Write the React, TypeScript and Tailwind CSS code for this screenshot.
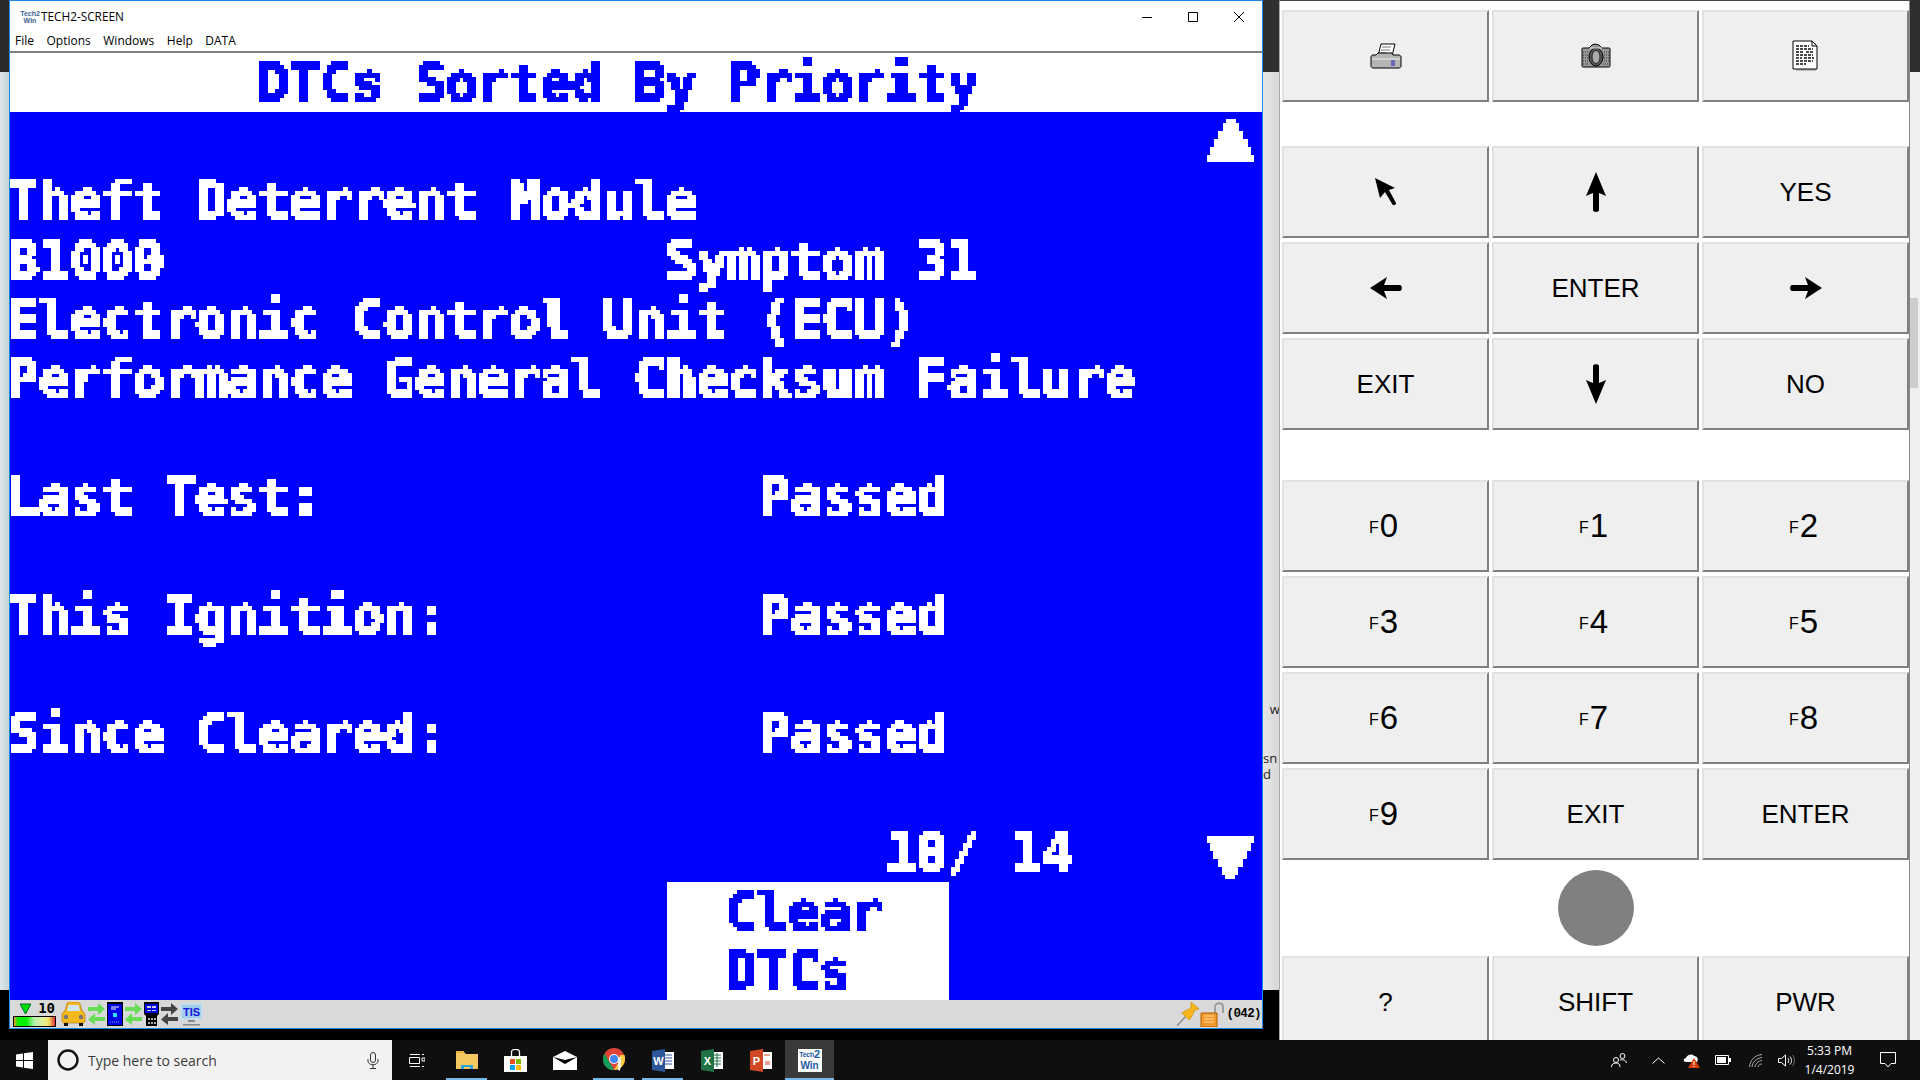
import type { ReactNode } from "react";

const mono = "font-['DejaVu_Sans_Mono',monospace] font-bold text-[54px] tracking-[-1.18px] leading-[59px] whitespace-pre";

// the scan tool draws a blocky LCD font, so the text gets sampled to a 4px grid
const LcdFilter = () => (
  <svg width="0" height="0" className="absolute">
    <filter id="lcd" x="0" y="-10%" width="100%" height="120%" colorInterpolationFilters="sRGB">
      <feFlood x="2" y="2" width="1" height="1" />
      <feComposite width="4" height="4" />
      <feTile result="grid" />
      <feComposite in="SourceGraphic" in2="grid" operator="in" />
      <feMorphology operator="dilate" radius="2" />
      <feComponentTransfer>
        <feFuncA type="discrete" tableValues="0 1 1 1" />
      </feComponentTransfer>
    </filter>
  </svg>
);

const Row = ({ children, className = "" }: { children?: ReactNode; className?: string }) => (
  <div className={`h-[59.19px] shrink-0 -ml-[3px] flex items-center ${mono} ${className}`}>{children}</div>
);

const Lcd = ({ children }: { children: ReactNode }) => <span className="[filter:url(#lcd)]">{children}</span>;

const Triangle = ({ className }: { className: string }) => (
  <svg width="47" height="43" viewBox="0 0 47 43" className={className} shapeRendering="crispEdges">
    <path d="M19 0h10v4h3v8h4v8h5v8h3v8h3v7H0v-7h3v-8h4v-8h4v-8h5V4h3z" fill="#fff" />
  </svg>
);

const PrinterIcon = () => (
  <svg width="32" height="26" viewBox="0 0 32 26">
    <path d="M11 1h14l-3 12H8z" fill="#fff" stroke="#000" />
    <path d="M12 4h9M11 7h9M10 10h7" stroke="#777" />
    <path d="M3 12h3l2-2h14l1 2h6c1 0 2 1 2 2v9c0 1-1 2-2 2H3c-1 0-2-1-2-2v-9c0-1 1-2 2-2z" fill="#b5b5b5" stroke="#000" />
    <path d="M2 16h28" stroke="#eee" />
    <path d="M21 18h4M21 20h4M21 22h4" stroke="#1d1db8" />
  </svg>
);

const CameraIcon = () => (
  <svg width="30" height="26" viewBox="0 0 30 26">
    <path d="M2 5h6l3-3 3-1 4 1 3 3h7c1 0 1 1 1 1v17c0 1-1 1-1 1H2c-1 0-1-1-1-1V6s0-1 1-1z" fill="#9a9a9a" stroke="#000" />
    <path d="M2 9h5M23 9h5M2 12h5M23 12h5M2 15h5M23 15h5M2 18h5M23 18h5M2 21h6M22 21h6" stroke="#333" strokeDasharray="1 1" />
    <ellipse cx="15" cy="14" rx="7" ry="9" fill="#555" stroke="#000" />
    <ellipse cx="15" cy="14" rx="4" ry="6.5" fill="#ababab" stroke="#222" />
    <path d="M9 5h12" stroke="#eee" />
  </svg>
);

const DocIcon = () => (
  <svg width="30" height="32" viewBox="0 0 30 32">
    <path d="M5 3h20v28H5z" fill="#bdbdbd" />
    <path d="M2 1h19l5 5v23H2z" fill="#fff" stroke="#000" />
    <path d="M21 1v5h5" fill="none" stroke="#000" />
    <path d="M5 6h13M5 9h17M5 12h8M15 12h8M5 15h17M5 18h6M13 18h10M5 21h17M5 24h10" stroke="#111" strokeWidth="1.3" strokeDasharray="3 1" />
  </svg>
);

const CursorIcon = () => (
  <svg width="24" height="30" viewBox="0 0 24 30">
    <path d="M1 1l20 10-6 2 7 13c.6 1.400-2.400 3-3.400 1.800L11 15l-5 6z" fill="#000" />
  </svg>
);

const UpIcon = () => (
  <svg width="22" height="42" viewBox="0 0 22 42">
    <path d="M11 1l10 24-7-3v17c0 2.500-6 2.500-6 0V22l-7 3z" fill="#000" />
  </svg>
);

const DownIcon = () => (
  <svg width="22" height="42" viewBox="0 0 22 42" className="rotate-180">
    <path d="M11 1l10 24-7-3v17c0 2.500-6 2.500-6 0V22l-7 3z" fill="#000" />
  </svg>
);

const LeftIcon = () => (
  <svg width="34" height="24" viewBox="0 0 34 24">
    <path d="M1 12L18 1l-3 8h16c2.500 0 2.500 6 0 6H15l3 8z" fill="#000" />
  </svg>
);

const RightIcon = () => (
  <svg width="34" height="24" viewBox="0 0 34 24" className="rotate-180">
    <path d="M1 12L18 1l-3 8h16c2.500 0 2.500 6 0 6H15l3 8z" fill="#000" />
  </svg>
);

const Key = ({ children }: { children: ReactNode }) => (
  <div className="h-[92px] flex items-center justify-center bg-[#efefef] border-t-2 border-l-2 border-t-[#e2e2e2] border-l-[#e2e2e2] border-r-2 border-b-2 border-r-[#808080] border-b-[#808080] text-[26px] text-black font-['Liberation_Sans',sans-serif]">
    {children}
  </div>
);

const FKey = ({ n }: { n: string }) => (
  <Key>
    <span className="flex items-baseline pr-[4px]">
      <span className="text-[16px] mr-[1px] translate-y-[-4px]">F</span>
      <span className="text-[33px] leading-none">{n}</span>
    </span>
  </Key>
);

const Pair = ({ top, bottom }: { top: string; bottom: string }) => (
  <svg width="19" height="22" viewBox="0 0 19 22">
    <path d="M1 4h10V0l7 6-7 6V8H1z" fill={top} />
    <path d="M18 14H8v-4l-7 6.500L8 22v-4h10z" fill={bottom} />
  </svg>
);

const StatusLeft = () => (
  <div className="flex items-center gap-[1px] pl-[3px]">
    <div className="w-[43px] h-[25px] flex flex-col justify-between mr-[4px]">
      <div className="flex items-center justify-between pl-[7px] pr-[1px] h-[13px]">
        <svg width="11" height="11" viewBox="0 0 11 11">
          <path d="M0 1h11L5.500 11z" fill="#00e000" stroke="#063" />
        </svg>
        <span className="font-['DejaVu_Sans_Mono',monospace] font-bold text-[14px] leading-none text-black">10</span>
      </div>
      <div className="h-[11px] border border-black bg-[linear-gradient(90deg,#e8a030_0%,#00f000_10%,#00f000_30%,#b8f0b0_50%,#e8f090_75%,#f0e060_85%,#e03030_100%)]" />
    </div>
    <svg width="25" height="25" viewBox="0 0 25 25">
      <path d="M4 9l2-7c0-1 1-2 2-2h9c1 0 2 1 2 2l2 7c2 1 3 2 3 4v6c0 1-1 2-2 2H3c-1 0-2-1-2-2v-6c0-2 1-3 3-4z" fill="#f6b91b" stroke="#a86a00" strokeWidth=".6" />
      <path d="M6 9l1.500-6h10L19 9z" fill="#cfe6f2" />
      <circle cx="5" cy="15" r="2.200" fill="#777" />
      <circle cx="20" cy="15" r="2.200" fill="#777" />
      <path d="M3 21h4v3H3zM18 21h4v3h-4z" fill="#111" />
    </svg>
    <Pair top="#66dd55" bottom="#66dd55" />
    <svg width="16" height="24" viewBox="0 0 16 24">
      <path d="M0 0h16v24H0z" fill="#000" />
      <path d="M1 2h14v21H1z" fill="#0000e6" />
      <path d="M4 5h8M4 7h5" stroke="#fff" />
      <path d="M6 11h4v4H6z" fill="#25e0e8" />
      <path d="M3 20h10" stroke="#9ad" strokeDasharray="1 1" />
    </svg>
    <Pair top="#66dd55" bottom="#66dd55" />
    <svg width="15" height="24" viewBox="0 0 15 24">
      <path d="M0 0h15v12l-2 2v10H2V14l-2-2z" fill="#000" />
      <path d="M1 2h13v9H1z" fill="#0000e6" />
      <path d="M3 4h4v2H3zM8 4h4v2H8zM3 8h4v1H3zM8 8h4v1H8z" fill="#ccd" />
      <path d="M4 16h2v2H4zM7 16h2v2H7zM10 16h2v2h-2zM4 20h2v2H4zM7 20h2v2H7zM10 20h2v2h-2z" fill="#aaa" />
    </svg>
    <Pair top="#444444" bottom="#444444" />
    <svg width="23" height="23" viewBox="0 0 23 23">
      <path d="M0 0h23v17H0z" fill="#c6dde8" />
      <path d="M2 2h19v13H2z" fill="#9ecdf0" />
      <path d="M8 17h7v2H8zM3 21h17v1.500H3z" fill="#888" />
      <text x="11.500" y="13" textAnchor="middle" fontFamily="Liberation Sans" fontWeight="bold" fontSize="11" fill="#1414d8">TIS</text>
    </svg>
  </div>
);

const StatusRight = () => (
  <div className="flex items-center pr-[1px]">
    <svg width="24" height="24" viewBox="0 0 24 24">
      <path d="M1 24l9-10" stroke="#888" strokeWidth="1.300" />
      <path d="M15 0l8 7-4 1-4 8-2 2-7-7 3-2 6-3z" fill="#f7b71a" stroke="#c97f00" strokeWidth=".6" />
    </svg>
    <svg width="25" height="25" viewBox="0 0 25 25">
      <path d="M15 11V5c0-5 8-5 8 0v6" fill="none" stroke="#9a9a9a" strokeWidth="1.800" />
      <path d="M1 11h16v14H1z" fill="#f39a2c" stroke="#b35f00" />
      <path d="M4 14h10M4 17h10M4 20h10" stroke="#ffd9a0" />
    </svg>
    <span className="font-['Liberation_Mono',monospace] font-bold text-[12.500px] tracking-[-.6px] text-black ml-[1px]">(042)</span>
  </div>
);

const TaskIcon = ({ children, active = false, open = false }: { children: ReactNode; active?: boolean; open?: boolean }) => (
  <div className={`relative w-[49px] h-full flex items-center justify-center ${active ? "bg-[#3a3a3a]" : ""}`}>
    {children}
    {open && <div className={`absolute bottom-0 h-[2px] bg-[#76b9ed] ${active ? "inset-x-0" : "inset-x-[4px]"}`} />}
  </div>
);

const Taskbar = () => (
  <div className="h-10 shrink-0 flex items-center bg-[#0f0f0f]">
    <div className="w-12 h-full flex items-center justify-center">
      <svg width="17" height="17" viewBox="0 0 17 17">
        <path d="M0 2.500l7-1V8H0zM8 1.300L17 0v8H8zM0 9h7v6.500l-7-1zM8 9h9v8l-9-1.300z" fill="#fff" />
      </svg>
    </div>
    <div className="w-[344px] h-full bg-[#f2f2f2] flex items-center pl-[9px] pr-[13px]">
      <svg width="22" height="22" viewBox="0 0 22 22">
        <circle cx="11" cy="11" r="9.500" fill="none" stroke="#111" strokeWidth="2.400" />
      </svg>
      <span className="ml-[9px] text-[14px] text-[#3b3b3b] font-['Open_Sans',sans-serif] flex-1">Type here to search</span>
      <svg width="12" height="17" viewBox="0 0 12 17" fill="none" stroke="#333">
        <rect x="3.500" y=".5" width="5" height="10" rx="2.500" />
        <path d="M1 7v2c0 5 10 5 10 0V7M6 13v3M3 16.500h6" />
      </svg>
    </div>
    <div className="w-[50px] h-full flex items-center justify-center">
      <svg width="16" height="15" viewBox="0 0 16 15" fill="none" stroke="#fff">
        <path d="M.5 4.500h10v6H.5zM1 1.500h10M1 13.500h10" />
        <path d="M13 1.500h2M13 5h3v3h-3zM13 13.500h2" />
      </svg>
    </div>
    <TaskIcon open>
      <svg width="22" height="18" viewBox="0 0 22 18">
        <path d="M0 1h8l2 2h12v15H0z" fill="#f3c95f" />
        <path d="M0 0h8v2H0z" fill="#e8b23f" />
        <path d="M5 14h12v4h-3v-2H8v2H5z" fill="#2aa6d9" />
      </svg>
    </TaskIcon>
    <TaskIcon>
      <svg width="23" height="23" viewBox="0 0 23 23">
        <path d="M0 7h23v16H0z" fill="#fff" />
        <path d="M7.500 8V3c0-3.500 8-3.500 8 0v5" fill="none" stroke="#fff" strokeWidth="1.300" />
        <path d="M6 10h5v5H6z" fill="#f25022" />
        <path d="M12 10h5v5h-5z" fill="#7fba00" />
        <path d="M6 16h5v5H6z" fill="#00a4ef" />
        <path d="M12 16h5v5h-5z" fill="#ffb900" />
      </svg>
    </TaskIcon>
    <TaskIcon>
      <svg width="24" height="19" viewBox="0 0 24 19">
        <path d="M0 6l12-6 12 6v13H0z" fill="#fff" />
        <path d="M0 6l12 3 12-3-12 7z" fill="#000" />
      </svg>
    </TaskIcon>
    <TaskIcon open>
      <svg width="22" height="24" viewBox="0 0 22 24">
        <circle cx="11" cy="11" r="11" fill="#db4437" />
        <path d="M1.500 5.500L7 15l4 7c-6 .5-11-4-11-11 0-2 .5-4 1.500-5.500z" fill="#0f9d58" />
        <path d="M22 11c0 6-5 11-11 11l4.500-7.500L17 7h4.500c.3 1 .5 2.500.5 4z" fill="#ffcd40" />
        <circle cx="11" cy="11" r="5" fill="#fff" />
        <circle cx="11" cy="11" r="4" fill="#4285f4" />
        <path d="M15 9h3v10l-1.500 4-1.500-1z" fill="#f5f0e0" />
      </svg>
    </TaskIcon>
    <TaskIcon open>
      <svg width="22" height="23" viewBox="0 0 22 23">
        <path d="M9 3h13v17H9z" fill="#fff" />
        <path d="M13 6h7M13 9h7M13 12h7M13 15h7" stroke="#2b579a" />
        <path d="M0 2l13-2v23L0 21z" fill="#2b579a" />
        <text x="6.500" y="16" textAnchor="middle" fontFamily="Liberation Sans" fontWeight="bold" fontSize="11" fill="#fff">W</text>
      </svg>
    </TaskIcon>
    <TaskIcon>
      <svg width="22" height="23" viewBox="0 0 22 23">
        <path d="M9 3h13v17H9z" fill="#fff" />
        <path d="M13 6h7M13 9h7M13 12h7M13 15h7M16 4v14" stroke="#217346" />
        <path d="M0 2l13-2v23L0 21z" fill="#217346" />
        <text x="6.500" y="16" textAnchor="middle" fontFamily="Liberation Sans" fontWeight="bold" fontSize="11" fill="#fff">X</text>
      </svg>
    </TaskIcon>
    <TaskIcon>
      <svg width="22" height="23" viewBox="0 0 22 23">
        <path d="M9 3h13v17H9z" fill="#fff" />
        <path d="M14 6h6M15 13h5M15 15h5" stroke="#d24726" />
        <path d="M0 2l13-2v23L0 21z" fill="#d24726" />
        <text x="6.500" y="16" textAnchor="middle" fontFamily="Liberation Sans" fontWeight="bold" fontSize="11" fill="#fff">P</text>
      </svg>
    </TaskIcon>
    <TaskIcon active open>
      <div className="w-6 h-[23px] bg-white flex flex-col items-center justify-center font-['Liberation_Sans',sans-serif] font-bold text-[#1e5aa0]">
        <span className="flex items-center text-[7px] leading-[11px] tracking-[-.3px]">Tech<span className="text-[11px]">2</span></span>
        <span className="text-[10px] leading-[11px]">Win</span>
      </div>
    </TaskIcon>
    <div className="flex-1" />
    <div className="w-[46px] flex justify-center">
      <svg width="16" height="15" viewBox="0 0 16 15" fill="none" stroke="#fff">
        <circle cx="5" cy="7" r="2.500" />
        <path d="M.5 14c0-3 2-4 4.500-4s4 1 4 4" />
        <circle cx="11.500" cy="3" r="2.500" />
        <path d="M9 7c2-.5 6-.5 6.500 3" />
      </svg>
    </div>
    <div className="w-[33px] flex justify-center">
      <svg width="13" height="7" viewBox="0 0 13 7" fill="none" stroke="#fff">
        <path d="M.5 6.500l6-5.500 6 5.500" />
      </svg>
    </div>
    <div className="w-[32px] flex justify-center">
      <svg width="17" height="15" viewBox="0 0 17 15">
        <path d="M3 9c-3 0-3-4 0-4 1-3 6-5 8-2 3 0 5 3 3 6z" fill="#fff" />
        <path d="M11 5l6 10H5z" fill="#d83b01" />
        <path d="M10.500 8h1v4h-1zM10.500 13h1v1h-1z" fill="#fff" />
      </svg>
    </div>
    <div className="w-[32px] flex justify-center">
      <svg width="16" height="10" viewBox="0 0 16 10">
        <path d="M.5.5h13v9H.5z" fill="none" stroke="#fff" />
        <path d="M2 2h9v6H2zM14 3h2v4h-2z" fill="#fff" />
      </svg>
    </div>
    <div className="w-[33px] flex justify-center">
      <svg width="14" height="13" viewBox="0 0 14 13" fill="none" stroke="#aaa">
        <path d="M.5 13C1 6 6 1 13 .5M3 13c.5-5 4-8.500 10-9.500M6 13c.3-3 3-6 7-6.500M9 13c0-2 2-3 4-3" />
      </svg>
    </div>
    <div className="w-[28px] flex justify-center">
      <svg width="17" height="13" viewBox="0 0 17 13" fill="none" stroke="#fff">
        <path d="M.5 4.500h3L7.500 1v11l-4-3.500h-3zM10 4c1 1.500 1 3.500 0 5M12 2.500c2 2.500 2 5.500 0 8" />
        <path d="M14.500 1c2.500 3 2.500 8 0 11" stroke="#777" />
      </svg>
    </div>
    <div className="w-[59px] mr-[7px] flex flex-col items-center text-[12px] leading-[19px] text-white font-['Open_Sans',sans-serif]">
      <span>5:33 PM</span>
      <span>1/4/2019</span>
    </div>
    <div className="w-[44px] flex justify-center">
      <svg width="16" height="16" viewBox="0 0 16 16" fill="none" stroke="#fff">
        <path d="M.5.5h15v11h-4.500l-3 3.500-3-3.500H.5z" />
      </svg>
    </div>
    <div className="w-[10px]" />
  </div>
);

export default function App() {
  return (
    <div className="w-[1920px] h-[1080px] flex flex-col bg-black overflow-hidden">
      <LcdFilter />
      <div className="h-[1040px] flex overflow-hidden">
        {/* desktop sliver on the left */}
        <div className="w-[9px] flex flex-col">
          <div className="h-[72px] bg-[#2b2b2b]" />
          <div className="h-[918px] bg-gradient-to-r from-[#dfe5e8] to-[#c4d4da]" />
        </div>

        {/* emulator window */}
        <div className="w-[1254px] h-[1029px] flex flex-col border-x border-b border-[#1e88e5] border-t border-t-[#1e88e5] bg-white overflow-hidden">
          <div className="h-[32px] shrink-0 flex items-center font-['Open_Sans',sans-serif] text-[11.800px] text-black">
            <div className="w-[31px] pl-[9px] flex flex-col items-center font-['Liberation_Sans',sans-serif] font-bold text-[7px] leading-[7px] text-[#3a5f90]">
              <span>Tech2</span>
              <span>Win</span>
            </div>
            <span className="flex-1">TECH2-SCREEN</span>
            <div className="w-[46px] flex justify-center">
              <svg width="10" height="10" viewBox="0 0 10 10"><path d="M0 5.500h10" stroke="#000" /></svg>
            </div>
            <div className="w-[46px] flex justify-center">
              <svg width="10" height="10" viewBox="0 0 10 10"><path d="M.5.5h9v9h-9z" fill="none" stroke="#000" /></svg>
            </div>
            <div className="w-[46px] flex justify-center">
              <svg width="10" height="10" viewBox="0 0 10 10"><path d="M0 0l10 10M10 0L0 10" stroke="#000" /></svg>
            </div>
          </div>
          <div className="h-[20px] shrink-0 flex items-center gap-[12.500px] pl-[5px] pb-[2px] border-b-2 border-b-[#808080] font-['Open_Sans',sans-serif] text-[12px] text-black">
            <span>File</span>
            <span>Options</span>
            <span>Windows</span>
            <span>Help</span>
            <span>DATA</span>
          </div>

          <Row className="text-[#0000ff]"><Lcd>{"        DTCs Sorted By Priority"}</Lcd></Row>
          <div className="flex-1 bg-[#0000ff] text-white flex flex-col">
            <Row className="justify-end pr-[8px]">
              <Triangle className="mb-[3px]" />
            </Row>
            <Row><Lcd>{"Theft Deterrent Module"}</Lcd></Row>
            <Row><Lcd>{"B1000                Symptom 31"}</Lcd></Row>
            <Row><Lcd>{"Electronic Control Unit (ECU)"}</Lcd></Row>
            <Row><Lcd>{"Performance General Checksum Failure"}</Lcd></Row>
            <Row />
            <Row><Lcd>{"Last Test:              Passed"}</Lcd></Row>
            <Row />
            <Row><Lcd>{"This Ignition:          Passed"}</Lcd></Row>
            <Row />
            <Row><Lcd>{"Since Cleared:          Passed"}</Lcd></Row>
            <Row />
            <Row className="justify-between pr-[8px]">
              <Lcd>{"                            10/ 14"}</Lcd>
              <Triangle className="rotate-180 mt-[10px]" />
            </Row>
            <div className="w-[282px] ml-[657px] flex-1 bg-white text-[#0000ff] pl-[61px]">
              <Row><Lcd>Clear</Lcd></Row>
              <Row><Lcd>DTCs</Lcd></Row>
            </div>
          </div>

          <div className="h-[28px] shrink-0 bg-[#d9d9d9] flex items-center justify-between">
            <StatusLeft />
            <StatusRight />
          </div>
        </div>

        {/* strip of the window behind */}
        <div className="w-[16px] flex flex-col">
          <div className="h-[72px] bg-[#2f2f2f]" />
          <div className="h-[918px] bg-gradient-to-r from-[#e6e6e6] to-[#d8d8d8] pt-[629px] text-[13px] leading-[16px] text-[#222] font-['Open_Sans',sans-serif] overflow-hidden whitespace-pre">
            <div>{"  w"}</div>
            <div className="mt-[33px]">sn</div>
            <div>d</div>
          </div>
        </div>

        {/* key panel */}
        <div className="w-[631px] h-full bg-white border-l border-l-[#a8a8a8] border-r border-r-[#888] border-t border-t-[#444] pl-[2px] pt-[9px] flex flex-col overflow-hidden">
          <div className="grid grid-cols-3 gap-x-[3px] w-[627px] shrink-0">
            <Key><PrinterIcon /></Key>
            <Key><CameraIcon /></Key>
            <Key><DocIcon /></Key>
          </div>
          <div className="grid grid-cols-3 gap-x-[3px] gap-y-1 w-[627px] mt-[44px] shrink-0">
            <Key><CursorIcon /></Key>
            <Key><UpIcon /></Key>
            <Key>YES</Key>
            <Key><LeftIcon /></Key>
            <Key>ENTER</Key>
            <Key><RightIcon /></Key>
            <Key>EXIT</Key>
            <Key><DownIcon /></Key>
            <Key>NO</Key>
          </div>
          <div className="grid grid-cols-3 gap-x-[3px] gap-y-1 w-[627px] mt-[50px] shrink-0">
            <FKey n="0" />
            <FKey n="1" />
            <FKey n="2" />
            <FKey n="3" />
            <FKey n="4" />
            <FKey n="5" />
            <FKey n="6" />
            <FKey n="7" />
            <FKey n="8" />
            <FKey n="9" />
            <Key>EXIT</Key>
            <Key>ENTER</Key>
          </div>
          <div className="h-[96px] shrink-0 flex items-center justify-center w-[627px]">
            <div className="w-[76px] h-[76px] rounded-full bg-[#808080]" />
          </div>
          <div className="grid grid-cols-3 gap-x-[3px] w-[627px] shrink-0">
            <Key>?</Key>
            <Key>SHIFT</Key>
            <Key>PWR</Key>
          </div>
        </div>

        {/* scrollbar of the window behind */}
        <div className="flex-1 flex flex-col bg-black">
          <div className="h-[72px] bg-[#2f2f2f]" />
          <div className="flex-1 bg-[#f0f0f0] pt-[226px]">
            <div className="h-[90px] w-[8px] bg-[#cdcdcd]" />
          </div>
        </div>
      </div>
      <Taskbar />
    </div>
  );
}
